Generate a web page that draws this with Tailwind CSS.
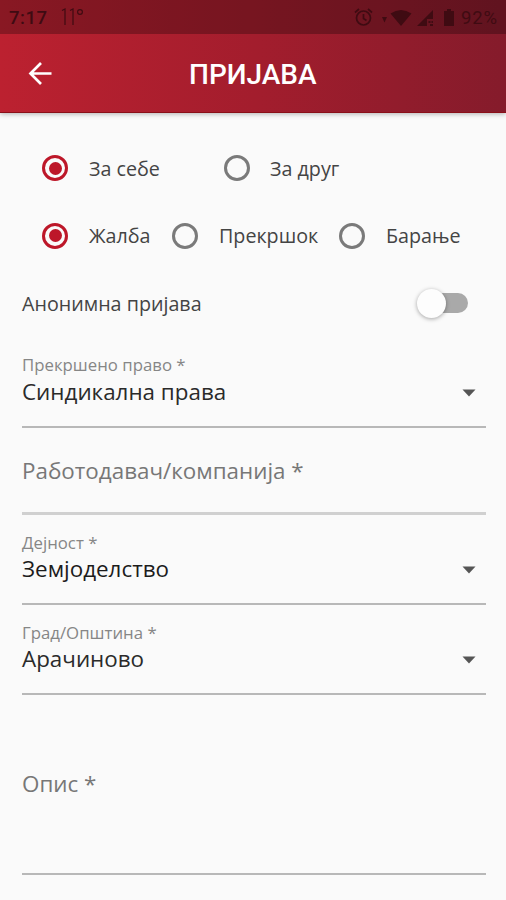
<!DOCTYPE html>
<html lang="mk">
<head>
<meta charset="utf-8">
<title>Пријава</title>
<script src="https://cdn.jsdelivr.net/npm/@tailwindcss/browser@4"></script>
</head>
<body class="w-[506px] h-[900px] overflow-hidden bg-[#fafafa] font-['Open_Sans','Noto_Sans',sans-serif] text-[#444] whitespace-nowrap">
<header class="h-[113px] bg-linear-to-r from-[#bc2130] via-[#a31d2d] to-[#851b2b] border-b border-[#8a0f18] shadow-[0_1px_5px_rgba(0,0,0,0.3)] font-[Roboto,sans-serif]">
  <div class="h-[34px] bg-black/27 flex items-center pl-[9px] pr-[8px] text-[#3f0b12]">
    <span class="w-[52px] pt-[2px] text-[18.5px] font-medium tracking-[0.5px] leading-[36px]">7:17</span>
    <svg class="w-[25px] h-[20px]" viewBox="0 0 25 20" fill="none" stroke="currentColor" stroke-width="1.2"><path d="M1 3.500 4 2V18M9 3.500 12 2V18"/><circle cx="19" cy="5" r="2.400"/></svg>
    <svg class="ml-auto w-[19px] h-[20px]" viewBox="0 0 19 20" fill="none" stroke="currentColor" stroke-width="1.7"><circle cx="9.5" cy="11" r="7"/><path d="M9.500 7V11.500L12.500 13.500M1 5.500 5 2M18 5.500 14 2"/></svg>
    <svg class="ml-[8px] mt-[1px] w-[31px] h-[20px]" viewBox="0 0 31 20" fill="currentColor"><path d="M1 9H6L3.500 14.500Z"/><path d="M9.500 5.500Q20-1.500 30.500 5.500L20 18Z"/></svg>
    <svg class="ml-[5px] mt-[1px] w-[17px] h-[20px]" viewBox="0 0 17 20" fill="currentColor"><path d="M0 18 16 2V11H10V18ZM11.500 13H13.500V15H11.500ZM14.500 13H16V15H14.500ZM13 16H16V18H13Z"/></svg>
    <svg class="ml-[9px] mt-[2px] w-[12px] h-[20px]" viewBox="0 0 12 20" fill="currentColor"><path d="M1 3H4V1H8V3H11V18H1Z"/></svg>
    <span class="ml-[6px] pt-[2px] w-[37px] text-[18.5px] tracking-[0.8px] leading-[36px]">92%</span>
  </div>
  <div class="h-[78px] flex items-center text-white">
    <svg class="ml-[28px] w-[24px] h-[24px]" viewBox="0 0 24 24" fill="none" stroke="currentColor" stroke-width="2.7"><path d="M23.500 12.500H2.500M13 2 2.500 12.500 13 23"/></svg>
    <h1 class="ml-[137px] mt-[4px] text-[28px] font-medium leading-[32px]">ПРИЈАВА</h1>
  </div>
</header>
<main class="pl-[22px] pr-[20.5px]">
  <div class="mt-[21px] h-[68px] flex items-center pl-[20px] text-[19.7px]">
    <span class="flex items-center justify-center w-[26px] h-[26px] rounded-full border-3 border-[#bd1729]"><i class="w-[13px] h-[13px] rounded-full bg-[#bd1729]"></i></span>
    <span class="ml-[21px] mt-[2px] w-[135px]">За себе</span>
    <span class="w-[26px] h-[26px] rounded-full border-3 border-[#7a7a7a]"></span>
    <span class="ml-[20px] mt-[2px]">За друг</span>
  </div>
  <div class="h-[67px] flex items-center pl-[20px] text-[19.7px]">
    <span class="flex items-center justify-center w-[26px] h-[26px] rounded-full border-3 border-[#bd1729]"><i class="w-[13px] h-[13px] rounded-full bg-[#bd1729]"></i></span>
    <span class="ml-[21px] mt-[1px] w-[83px]">Жалба</span>
    <span class="w-[26px] h-[26px] rounded-full border-3 border-[#7a7a7a]"></span>
    <span class="ml-[21px] mt-[1px] w-[120px]">Прекршок</span>
    <span class="w-[26px] h-[26px] rounded-full border-3 border-[#7a7a7a]"></span>
    <span class="ml-[21px] mt-[1px]">Барање</span>
  </div>
  <div class="h-[68px] flex items-center justify-between pr-[18px] text-[19.7px]">
    <span class="mt-[2px]">Анонимна пријава</span>
    <span class="flex items-center w-[51px] h-[30px]"><i class="w-[29px] h-[29px] rounded-full bg-[#fdfdfd] shadow-[0_1px_4px_rgba(0,0,0,0.35)] z-10"></i><i class="-ml-[15px] w-[37px] h-[20px] rounded-full bg-[#a9a9a9]"></i></span>
  </div>
  <div class="h-[91px] pt-[18px] border-b-2 border-[#b8b8b8]">
    <div class="text-[16.8px] leading-[20px] text-[#868686]">Прекршено право *</div>
    <div class="flex items-center justify-between pr-[10px] text-[22.4px] leading-[33px] text-[#2a2a2a]"><span>Синдикална права</span><svg class="mt-[2px] w-[14px] h-[8px]" viewBox="0 0 14 8" fill="#555"><path d="M.5.5H13.500L7 7.500Z"/></svg></div>
  </div>
  <div class="h-[87px] pt-[26px] border-b-3 border-[#d0d0d0] text-[22.4px] leading-[33px] text-[#777]">Работодавач/компанија *</div>
  <div class="h-[90px] pt-[18px] border-b-2 border-[#b8b8b8]">
    <div class="text-[16.8px] leading-[20px] text-[#868686]">Дејност *</div>
    <div class="-mt-[1px] flex items-center justify-between pr-[10px] text-[22.4px] leading-[33px] text-[#1c1c1c]"><span>Земјоделство</span><svg class="mt-[2px] w-[14px] h-[8px]" viewBox="0 0 14 8" fill="#555"><path d="M.5.5H13.500L7 7.500Z"/></svg></div>
  </div>
  <div class="h-[90px] pt-[18px] border-b-2 border-[#b8b8b8]">
    <div class="text-[16.8px] leading-[20px] text-[#868686]">Град/Општина *</div>
    <div class="-mt-[1px] flex items-center justify-between pr-[10px] text-[22.4px] leading-[33px] text-[#2a2a2a]"><span>Арачиново</span><svg class="mt-[2px] w-[14px] h-[8px]" viewBox="0 0 14 8" fill="#555"><path d="M.5.5H13.500L7 7.500Z"/></svg></div>
  </div>
  <div class="h-[180px] pt-[72px] border-b-2 border-[#b8b8b8] text-[22.4px] leading-[33px] text-[#777]">Опис *</div>
</main>
</body>
</html>
